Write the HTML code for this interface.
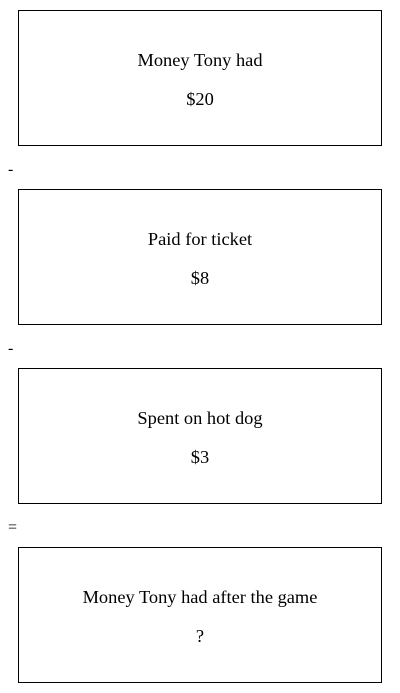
<!DOCTYPE html>
<html><head><style>
body{margin:0;width:400px;height:693px;background:#fff;font-family:"Liberation Serif",serif;font-size:18.4px;color:#000;position:relative}
.b{position:absolute;left:18px;width:362px;height:134px;border:1px solid #000}
.t{position:absolute;left:0;right:0;text-align:center;line-height:20px}
.t1{top:39px}.t2{top:78px}
.o{position:absolute;left:8px;line-height:20px;font-size:16px}
</style></head><body>
<div class="b" style="top:10px"><div class="t t1">Money Tony had</div><div class="t t2">$20</div></div>
<div class="o" style="top:160px">-</div>
<div class="b" style="top:189px"><div class="t t1">Paid for ticket</div><div class="t t2">$8</div></div>
<div class="o" style="top:339px">-</div>
<div class="b" style="top:368px"><div class="t t1">Spent on hot dog</div><div class="t t2">$3</div></div>
<div class="o" style="top:518px">=</div>
<div class="b" style="top:547px"><div class="t t1">Money Tony had after the game</div><div class="t t2">?</div></div>
</body></html>
